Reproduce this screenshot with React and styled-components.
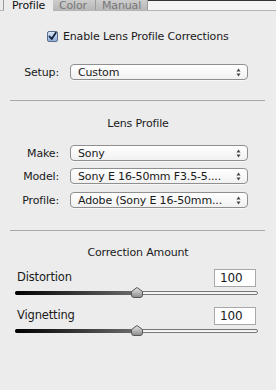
import React from "react";
import styled, { createGlobalStyle } from "styled-components";

const GlobalStyle = createGlobalStyle`
  html, body { margin: 0; padding: 0; background: #ececec; }
  body {
    font-family: "DejaVu Sans", "Liberation Sans", sans-serif;
    font-size: 11px;
    letter-spacing: -0.15px;
    color: #1a1a1a;
  }
`;

const Panel = styled.div`
  width: 276px;
  height: 390px;
  background: #ececec;
  overflow: hidden;
`;

const TabBar = styled.div`
  display: flex;
  height: 11px;
  border-bottom: 1px solid #b4b4b4;
  box-sizing: border-box;
`;

const TabEdge = styled.div`
  width: 3px;
  border-right: 1px solid #9a9a9a;
`;

const Tab = styled.div`
  line-height: 11px;
  font-size: 11px;
  padding: 0 ${(p) => (p.$active ? "8px" : "6px")};
  color: ${(p) => (p.$active ? "#111" : "#777")};
  background: ${(p) =>
    p.$active ? "#ececec" : "linear-gradient(#cdcdcd, #b8b8b8)"};
  border-right: 1px solid ${(p) => (p.$active ? "#ececec" : "#9c9c9c")};
  margin-bottom: ${(p) => (p.$active ? "-1px" : "0")};
  height: ${(p) => (p.$active ? "11px" : "10px")};
  width: ${(p) => p.$w}px;
  box-sizing: border-box;
`;

const TabRest = styled.div`
  flex: 1;
  border-top: 1px solid #333;
  background: #f4f4f4;
`;

const Content = styled.div`
  display: flex;
  flex-direction: column;
`;

const CheckRow = styled.label`
  display: flex;
  align-items: center;
  gap: 5px;
  margin: 19px 0 0 47px;
  height: 12px;
`;

const CheckBox = styled.span`
  width: 11px;
  height: 11px;
  box-sizing: border-box;
  border: 1px solid #5b6d8a;
  border-radius: 2px;
  background: linear-gradient(#d9e6f6, #8eaedb);
  display: flex;
  align-items: center;
  justify-content: center;
`;

const FieldRow = styled.div`
  display: grid;
  grid-template-columns: 59px 178px;
  column-gap: 11px;
  align-items: center;
  height: 16px;
  margin-top: ${(p) => p.$top}px;
`;

const Label = styled.span`
  text-align: right;
`;

const Popup = styled.div`
  height: 16px;
  box-sizing: border-box;
  border: 1px solid #8f8f8f;
  border-radius: 4px;
  background: linear-gradient(#ffffff, #f1f1f1);
  box-shadow: 0 1px 0 rgba(255, 255, 255, 0.6);
  display: flex;
  align-items: center;
  justify-content: space-between;
  padding: 0 6px 0 7px;
  white-space: nowrap;
`;

const Divider = styled.div`
  height: 1px;
  background: #a9a9a9;
  margin: ${(p) => p.$top}px 11px 0 10px;
`;

const SectionTitle = styled.div`
  text-align: center;
  height: 14px;
  line-height: 14px;
  margin-top: ${(p) => p.$top}px;
`;

const SliderHead = styled.div`
  display: flex;
  justify-content: space-between;
  align-items: center;
  padding: 0 20px 0 17px;
  margin-top: ${(p) => p.$top}px;
  height: 18px;
`;

const SliderLabel = styled.span`
  font-size: 11.5px;
  margin-top: -2px;
`;

const ValueBox = styled.div`
  width: 42px;
  height: 18px;
  box-sizing: border-box;
  border: 1px solid #a8a8a8;
  background: #fff;
  font-size: 12px;
  line-height: 16px;
  padding-left: 5px;
`;

const Track = styled.div`
  position: relative;
  height: 4px;
  margin: ${(p) => p.$top}px 18px 0 15px;
  box-sizing: border-box;
  border: 1px solid #777;
  border-radius: 2px;
  background: linear-gradient(#e9e9e9, #ffffff);
`;

const Fill = styled.div`
  position: absolute;
  left: -1px;
  top: -1px;
  height: 4px;
  border-radius: 2px 0 0 2px;
  background: linear-gradient(90deg, #000 0%, #2a2a2a 40%, #6b6b6b 100%);
`;

const Thumb = styled.svg`
  position: absolute;
  top: -5px;
  margin-left: -6px;
`;

const Arrows = () => (
  <svg width="5" height="9" viewBox="0 0 5 9">
    <path d="M2.5 0.5 L4.5 3.5 H0.5 Z" fill="#444" />
    <path d="M2.5 8.5 L4.5 5.5 H0.5 Z" fill="#444" />
  </svg>
);

const Select = ({ value }) => (
  <Popup>
    <span>{value}</span>
    <Arrows />
  </Popup>
);

const Slider = ({ value, top, id }) => (
  <Track $top={top}>
    <Fill style={{ width: `${value}%` }} />
    <Thumb
      width="12"
      height="11"
      viewBox="0 0 12 11"
      style={{ left: `${value}%` }}
    >
      <defs>
        <linearGradient id={id} x1="0" y1="0" x2="0" y2="1">
          <stop offset="0" stopColor="#e8e8e8" />
          <stop offset="1" stopColor="#8a8a8a" />
        </linearGradient>
      </defs>
      <path
        d="M6 0.5 L11.5 4.5 V8 Q11.5 10.5 9 10.5 H3 Q0.5 10.5 0.5 8 V4.5 Z"
        fill={`url(#${id})`}
        stroke="#555"
        strokeWidth="1"
      />
    </Thumb>
  </Track>
);

export default function App() {
  return (
    <Panel>
      <GlobalStyle />
      <TabBar>
        <TabEdge />
        <Tab $active $w={49}>Profile</Tab>
        <Tab $w={43}>Color</Tab>
        <Tab $w={52}>Manual</Tab>
        <TabRest />
      </TabBar>
      <Content>
        <CheckRow>
          <CheckBox>
            <svg width="9" height="9" viewBox="0 0 9 9">
              <path
                d="M1.5 4.5 L3.7 7 L7.8 0.8"
                fill="none"
                stroke="#15223a"
                strokeWidth="1.8"
                strokeLinecap="round"
                strokeLinejoin="round"
              />
            </svg>
          </CheckBox>
          <span>Enable Lens Profile Corrections</span>
        </CheckRow>
        <FieldRow $top={22}>
          <Label>Setup:</Label>
          <Select value="Custom" />
        </FieldRow>
        <Divider $top={20} />
        <SectionTitle $top={16}>Lens Profile</SectionTitle>
        <FieldRow $top={14}>
          <Label>Make:</Label>
          <Select value="Sony" />
        </FieldRow>
        <FieldRow $top={7}>
          <Label>Model:</Label>
          <Select value="Sony E 16-50mm F3.5-5...." />
        </FieldRow>
        <FieldRow $top={8}>
          <Label>Profile:</Label>
          <Select value="Adobe (Sony E 16-50mm..." />
        </FieldRow>
        <Divider $top={22} />
        <SectionTitle $top={15}>Correction Amount</SectionTitle>
        <SliderHead $top={9}>
          <SliderLabel>Distortion</SliderLabel>
          <ValueBox>100</ValueBox>
        </SliderHead>
        <Slider value={50} top={4} id="t1" />
        <SliderHead $top={12}>
          <SliderLabel>Vignetting</SliderLabel>
          <ValueBox>100</ValueBox>
        </SliderHead>
        <Slider value={50} top={4} id="t2" />
      </Content>
    </Panel>
  );
}
